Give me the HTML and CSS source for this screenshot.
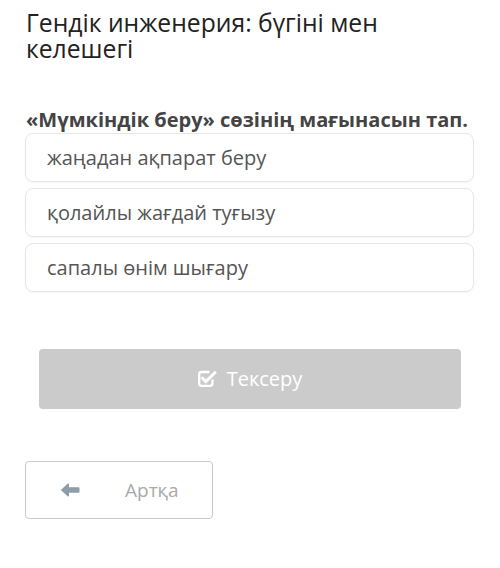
FILE: index.html
```html
<!DOCTYPE html>
<html lang="kk">
<head>
<meta charset="utf-8">
<title>Гендік инженерия</title>
<link rel="stylesheet" href="styles.css">
</head>
<body>
<main class="page">
  <h1 class="title">Гендік инженерия: бүгіні мен келешегі</h1>
  <p class="question">«Мүмкіндік беру» сөзінің мағынасын тап.</p>
  <ul class="options">
    <li class="option">жаңадан ақпарат беру</li>
    <li class="option">қолайлы жағдай туғызу</li>
    <li class="option">сапалы өнім шығару</li>
  </ul>
  <button class="check-btn" type="button">
    <svg class="check-icon" width="19" height="17" viewBox="0 0 19 17" aria-hidden="true">
      <path d="M11.5 2H3.5A2.3 2.3 0 0 0 1.2 4.3v9.2a2.3 2.3 0 0 0 2.3 2.3h8.7a2.3 2.3 0 0 0 2.3-2.3V9.5" fill="none" stroke="#fff" stroke-width="2.3"/>
      <path d="M4.5 8.3l3.3 3.3L16.8 2.8" fill="none" stroke="#fff" stroke-width="3" stroke-linecap="square"/>
    </svg>
    <span>Тексеру</span>
  </button>
  <button class="back-btn" type="button">
    <svg class="back-icon" width="20" height="14" viewBox="0 0 20 14" aria-hidden="true">
      <path d="M0.8 7 L7.6 0.8 Q8.6 0 9 1.2 L9 4.3 L18.5 4.3 Q19.5 4.3 19.5 5.3 L19.5 8.7 Q19.5 9.7 18.5 9.7 L9 9.7 L9 12.8 Q8.6 14 7.6 13.2 Z" fill="#8d9ca8"/>
    </svg>
    <span class="back-label">Артқа</span>
  </button>
</main>
</body>
</html>
```

FILE: styles.css
```css
html, body {
  margin: 0;
  padding: 0;
  background: #ffffff;
}

body {
  font-family: "Open Sans", "Noto Sans", sans-serif;
}

.page {
  display: flex;
  flex-direction: column;
  align-items: flex-start;
  padding: 10px 26px 0 25px;
}

.title {
  margin: 0 0 0 1px;
  font-size: 24.7px;
  line-height: 26px;
  font-weight: 400;
  color: #222222;
  width: 400px;
}

.question {
  margin: 46px 0 0 1px;
  font-size: 20px;
  line-height: 24px;
  font-weight: 700;
  color: #444444;
  white-space: nowrap;
}

.options {
  list-style: none;
  margin: 1px 0 0 0;
  padding: 0;
  width: 449px;
  display: flex;
  flex-direction: column;
  gap: 6px;
}

.option {
  box-sizing: border-box;
  height: 49px;
  line-height: 47px;
  border: 1px solid #e6e6e6;
  border-radius: 8px;
  padding-left: 21px;
  font-size: 20px;
  color: #555555;
  box-shadow: 0 1px 2px rgba(0, 0, 0, 0.04);
}

.check-btn {
  margin: 57px 0 0 14px;
  width: 422px;
  height: 60px;
  border: none;
  border-radius: 4px;
  background: #cbcbcb;
  color: #ffffff;
  font-family: inherit;
  font-size: 20px;
  display: flex;
  align-items: center;
  justify-content: center;
  gap: 10px;
  padding: 0 0 2px 0;
}

.check-icon {
  display: block;
  margin-top: 1px;
}

.back-btn {
  margin-top: 52px;
  box-sizing: border-box;
  width: 188px;
  height: 58px;
  background: #ffffff;
  border: 1px solid #c9c9c9;
  border-radius: 4px;
  font-family: inherit;
  font-size: 19px;
  color: #a9a9a9;
  display: flex;
  align-items: center;
  padding: 0 0 0 34px;
}

.back-icon {
  display: block;
}

.back-label {
  margin-left: 45px;
}
```
